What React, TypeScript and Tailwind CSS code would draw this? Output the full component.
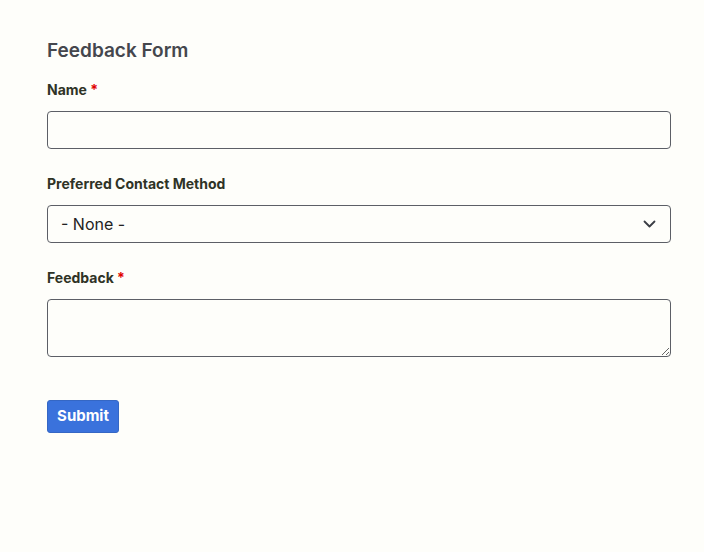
import React from "react";

export default function App() {
  return (
    <div
      className="w-[704px] h-[552px] bg-[#fefefa] pl-[47px] pt-[37px]"
      style={{ fontFamily: "Inter, 'Liberation Sans', sans-serif" }}
    >
      <div className="w-[624px] flex flex-col">
        <h1 className="text-[19px] leading-[28px] font-semibold text-[#45474d]">Feedback Form</h1>

        <label className="mt-[15px] text-[14px] leading-[20px] font-bold text-[#2f3326]">
          Name <span className="text-[#e00000]">*</span>
        </label>
        <input
          type="text"
          className="mt-[11px] h-[38px] w-full rounded-[4px] border border-[#5c5f66] bg-transparent px-[12px] outline-none"
        />

        <label className="mt-[25px] text-[14px] leading-[20px] font-bold text-[#2f3326]">
          Preferred Contact Method
        </label>
        <div className="mt-[11px] h-[38px] w-full rounded-[4px] border border-[#5c5f66] flex items-center justify-between pl-[13px] pr-[14px]">
          <span className="text-[16px] text-[#222]">- None -</span>
          <svg width="13" height="8" viewBox="0 0 13 8" fill="none">
            <path d="M1.5 1.5 L6.5 6.5 L11.5 1.5" stroke="#3a3d44" strokeWidth="1.8" strokeLinecap="round" strokeLinejoin="round" />
          </svg>
        </div>

        <label className="mt-[25px] text-[14px] leading-[20px] font-bold text-[#2f3326]">
          Feedback <span className="text-[#e00000]">*</span>
        </label>
        <textarea className="mt-[11px] h-[58px] w-full rounded-[4px] border border-[#5c5f66] bg-transparent outline-none resize-y block" />

        <div className="mt-[43px]">
          <button className="h-[33px] w-[72px] rounded-[3px] bg-[#3a72dc] border border-[#3567c4] text-white text-[15px] font-bold">
            Submit
          </button>
        </div>
      </div>
    </div>
  );
}
